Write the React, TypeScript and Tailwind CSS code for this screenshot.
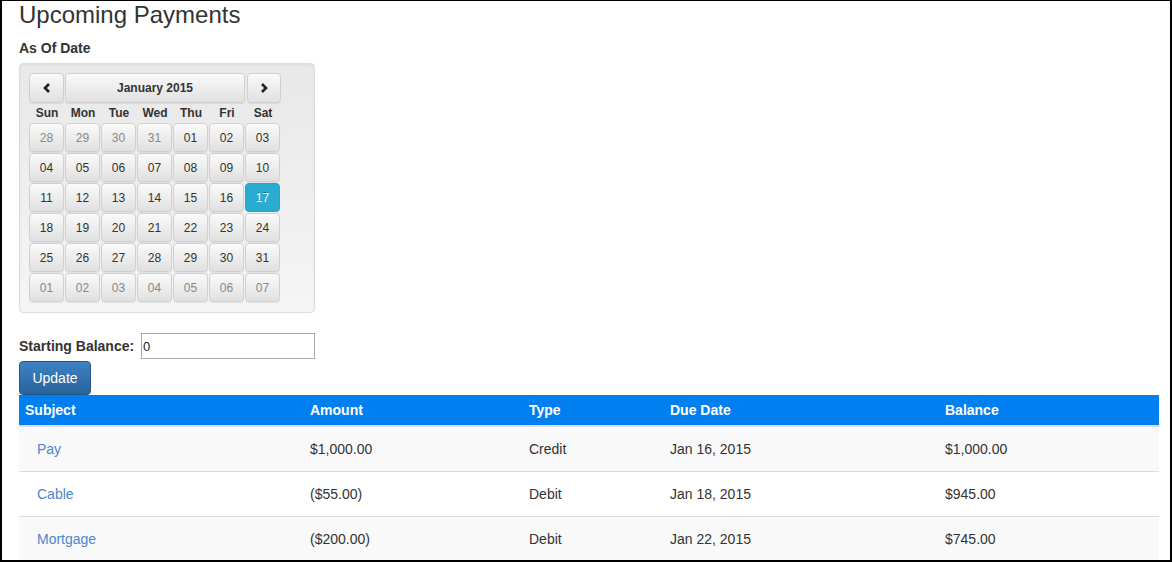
const dayNames = ['Sun', 'Mon', 'Tue', 'Wed', 'Thu', 'Fri', 'Sat'];

const weeks: { d: string; muted?: boolean; active?: boolean }[][] = [
  [
    { d: '28', muted: true },
    { d: '29', muted: true },
    { d: '30', muted: true },
    { d: '31', muted: true },
    { d: '01' },
    { d: '02' },
    { d: '03' },
  ],
  [{ d: '04' }, { d: '05' }, { d: '06' }, { d: '07' }, { d: '08' }, { d: '09' }, { d: '10' }],
  [{ d: '11' }, { d: '12' }, { d: '13' }, { d: '14' }, { d: '15' }, { d: '16' }, { d: '17', active: true }],
  [{ d: '18' }, { d: '19' }, { d: '20' }, { d: '21' }, { d: '22' }, { d: '23' }, { d: '24' }],
  [{ d: '25' }, { d: '26' }, { d: '27' }, { d: '28' }, { d: '29' }, { d: '30' }, { d: '31' }],
  [
    { d: '01', muted: true },
    { d: '02', muted: true },
    { d: '03', muted: true },
    { d: '04', muted: true },
    { d: '05', muted: true },
    { d: '06', muted: true },
    { d: '07', muted: true },
  ],
];

const payments = [
  { subject: 'Pay', amount: '$1,000.00', type: 'Credit', due: 'Jan 16, 2015', balance: '$1,000.00' },
  { subject: 'Cable', amount: '($55.00)', type: 'Debit', due: 'Jan 18, 2015', balance: '$945.00' },
  { subject: 'Mortgage', amount: '($200.00)', type: 'Debit', due: 'Jan 22, 2015', balance: '$745.00' },
];

const btn =
  'rounded-[4px] border border-[#d0d0d0] bg-[linear-gradient(to_bottom,#fafafa,#e0e0e0)] shadow-[0_1px_1px_rgba(0,0,0,0.075)] text-[#333] text-[12px] flex items-center justify-center';

function Chevron({ dir }: { dir: 'left' | 'right' }) {
  return (
    <svg width="8" height="10" viewBox="0 0 8 10">
      <polyline
        points={dir === 'left' ? '6,1 2,5 6,9' : '2,1 6,5 2,9'}
        fill="none"
        stroke="#222"
        strokeWidth="2.6"
        strokeLinejoin="miter"
      />
    </svg>
  );
}

function Calendar() {
  return (
    <div className="w-[296px] rounded-[4px] border border-[#dcdcdc] bg-[linear-gradient(to_bottom,#e8e8e8,#f5f5f5)] p-[9px] shadow-[inset_0_1px_3px_rgba(0,0,0,0.05)]">
      <div className="grid w-[252px] grid-cols-[repeat(7,36px)]">
        <div className="h-[30px]">
          <button className={`${btn} h-[30px] w-[35px]`}>
            <Chevron dir="left" />
          </button>
        </div>
        <div className="col-span-5 h-[30px]">
          <button className={`${btn} h-[30px] w-[180px] font-bold`}>January 2015</button>
        </div>
        <div className="flex h-[30px] justify-end">
          <button className={`${btn} h-[30px] w-[34px]`}>
            <Chevron dir="right" />
          </button>
        </div>

        {dayNames.map((n) => (
          <div key={n} className="flex h-[20px] items-center justify-center text-[12px] font-bold text-[#333]">
            {n}
          </div>
        ))}

        {weeks.map((week, wi) =>
          week.map((c, ci) => (
            <div key={`${wi}-${ci}`} className="h-[30px]">
              {c.active ? (
                <button className="flex h-[29px] w-[35px] items-center justify-center rounded-[4px] border border-[#28a4c9] bg-[#2aabd2] text-[12px] text-white [text-shadow:0_-1px_0_rgba(0,0,0,0.25)]">
                  {c.d}
                </button>
              ) : (
                <button className={`${btn} h-[29px] w-[35px] ${c.muted ? 'text-[#888]' : ''}`}>{c.d}</button>
              )}
            </div>
          ))
        )}
      </div>
    </div>
  );
}

export default function App() {
  return (
    <div className="h-[562px] w-[1172px] overflow-hidden border-t border-r-2 border-b-2 border-l-2 border-black bg-white pt-[1px] pr-[11px] pl-[17px] font-['Liberation_Sans',Arial,sans-serif] text-[#333]">
      <h1 className="text-[24px] leading-[26px] font-normal">Upcoming Payments</h1>
      <div className="mt-[10px] mb-[5px] text-[14px] leading-5 font-bold">As Of Date</div>
      <Calendar />

      <div className="mt-[20px] flex items-center">
        <span className="w-[122px] text-[14px] leading-5 font-bold">Starting Balance:</span>
        <input
          defaultValue="0"
          className="h-[26px] w-[174px] border border-[#a9a9a9] px-[1px] text-[13px] text-[#222] outline-none"
        />
      </div>
      <button className="mt-[2px] h-[34px] w-[72px] rounded-[4px] border border-[#245580] bg-[linear-gradient(to_bottom,#3d82c2,#28639c)] text-[14px] text-white">
        Update
      </button>

      <table className="w-[1140px] table-fixed border-collapse text-[14px] leading-5">
        <colgroup>
          <col className="w-[285px]" />
          <col className="w-[219px]" />
          <col className="w-[141px]" />
          <col className="w-[275px]" />
          <col className="w-[220px]" />
        </colgroup>
        <thead>
          <tr className="bg-[#0080f0] text-white">
            <th className="border-b-2 border-[#ddd] px-[6px] py-[5px] text-left font-bold">Subject</th>
            <th className="border-b-2 border-[#ddd] px-[6px] py-[5px] text-left font-bold">Amount</th>
            <th className="border-b-2 border-[#ddd] px-[6px] py-[5px] text-left font-bold">Type</th>
            <th className="border-b-2 border-[#ddd] px-[6px] py-[5px] text-left font-bold">Due Date</th>
            <th className="border-b-2 border-[#ddd] px-[6px] py-[5px] text-left font-bold">Balance</th>
          </tr>
        </thead>
        <tbody>
          {payments.map((p, i) => (
            <tr key={p.subject} className={i % 2 === 0 ? 'bg-[#f9f9f9]' : 'bg-white'}>
              <td className="border-t border-[#ddd] py-[12px] pr-[6px] pl-[18px]">
                <a href="#" className="text-[#4a87cb]">
                  {p.subject}
                </a>
              </td>
              <td className="border-t border-[#ddd] px-[6px] py-[12px]">{p.amount}</td>
              <td className="border-t border-[#ddd] px-[6px] py-[12px]">{p.type}</td>
              <td className="border-t border-[#ddd] px-[6px] py-[12px]">{p.due}</td>
              <td className="border-t border-[#ddd] px-[6px] py-[12px]">{p.balance}</td>
            </tr>
          ))}
        </tbody>
      </table>
    </div>
  );
}
